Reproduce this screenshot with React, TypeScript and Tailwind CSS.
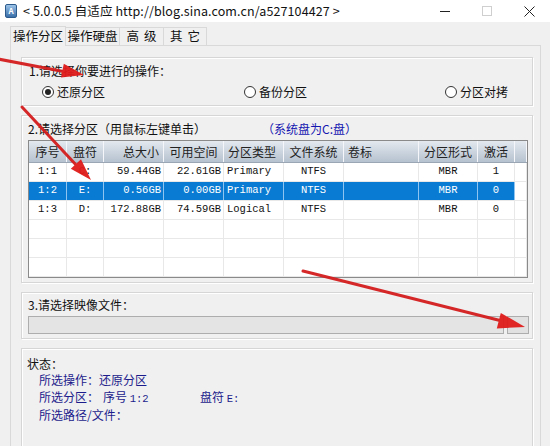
import React from 'react'

const cjk = { fontFamily: '"Noto Sans CJK SC", "Noto Sans", sans-serif' }
const mono = { fontFamily: '"Liberation Mono", "Noto Sans CJK SC", monospace' }

type Col = { label: string; w: string; align: string }

const cols: Col[] = [
  { label: '序号', w: 'w-[38px]', align: 'justify-center' },
  { label: '盘符', w: 'w-[37px]', align: 'justify-center' },
  { label: '总大小', w: 'w-[60px]', align: 'justify-end pr-1' },
  { label: '可用空间', w: 'w-[60px]', align: 'justify-center' },
  { label: '分区类型', w: 'w-[60px]', align: 'justify-start pl-1' },
  { label: '文件系统', w: 'w-[60px]', align: 'justify-center' },
  { label: '卷标', w: 'w-[75px]', align: 'justify-start pl-1' },
  { label: '分区形式', w: 'w-[59px]', align: 'justify-center' },
  { label: '激活', w: 'w-[37px]', align: 'justify-center' },
  { label: '', w: 'flex-1', align: 'justify-center' },
]

const rows = [
  ['1:1', 'C:', '59.44GB', '22.61GB', 'Primary', 'NTFS', '', 'MBR', '1', ''],
  ['1:2', 'E:', '0.56GB', '0.00GB', 'Primary', 'NTFS', '', 'MBR', '0', ''],
  ['1:3', 'D:', '172.88GB', '74.59GB', 'Logical', 'NTFS', '', 'MBR', '0', ''],
  ['', '', '', '', '', '', '', '', '', ''],
  ['', '', '', '', '', '', '', '', '', ''],
  ['', '', '', '', '', '', '', '', '', ''],
]

const dataAlign = [
  'justify-center',
  'justify-center',
  'justify-end pr-[2px]',
  'justify-end pr-[2px]',
  'justify-start pl-[3px]',
  'justify-center',
  'justify-start',
  'justify-center',
  'justify-center',
  'justify-center',
]

function Radio({ label, checked, className }: { label: string; checked?: boolean; className?: string }) {
  return (
    <div className={`flex items-center gap-[3px] ${className ?? ''}`}>
      <span className="w-[12px] h-[12px] rounded-full border border-[#333] bg-white flex items-center justify-center">
        {checked && <span className="w-[6px] h-[6px] rounded-full bg-[#222]" />}
      </span>
      <span className="text-[12px] text-[#111]">{label}</span>
    </div>
  )
}

function Group({ className, children }: { className: string; children: React.ReactNode }) {
  return (
    <div className={`border border-[#d6d6d6] shadow-[inset_1px_1px_0_#ffffff,1px_1px_0_#ffffff] ${className}`}>
      {children}
    </div>
  )
}

export default function App() {
  return (
    <div className="relative w-[550px] h-[446px] bg-[#f0f0f0] overflow-hidden" style={cjk}>
      {/* Title bar */}
      <div className="h-[22px] bg-white flex items-center">
        <div className="ml-[5px] w-[12px] h-[14px] rounded-[2px] bg-gradient-to-b from-[#9cc3e8] to-[#3a6fa8] border border-[#2c5a8c] flex items-center justify-center">
          <span className="text-[8px] leading-none text-white font-bold">A</span>
        </div>
        <span className="ml-[6px] text-[12.5px] text-[#111] tracking-[0.1px]">
          &lt; 5.0.0.5 自适应 http://blog.sina.com.cn/a527104427 &gt;
        </span>
        <div className="ml-auto flex items-center">
          <div className="w-[10px] h-[1px] bg-[#222] mr-[32px]" />
          <div className="w-[10px] h-[10px] border border-[#cfcfcf] mr-[32px]" />
          <svg width="11" height="11" viewBox="0 0 11 11" className="mr-[15px]">
            <path d="M0.5 0.5 L10.5 10.5 M10.5 0.5 L0.5 10.5" stroke="#222" strokeWidth="1" />
          </svg>
        </div>
      </div>

      {/* Tabs */}
      <div className="h-[23px] pl-[10px] flex items-end">
        <div className="h-[20px] w-[56px] bg-[#f0f0f0] border border-[#d9d9d9] border-b-0 flex items-center justify-center text-[12.5px] text-[#111] relative z-10 -mb-px pb-px">
          操作分区
        </div>
        <div className="h-[18px] w-[54px] bg-[#f0f0f0] border border-[#d9d9d9] border-b-0 border-l-0 flex items-center justify-center text-[12.5px] text-[#111]">
          操作硬盘
        </div>
        <div className="h-[18px] w-[44px] bg-[#f0f0f0] border border-[#d9d9d9] border-b-0 border-l-0 flex items-center justify-center text-[12.5px] text-[#111] tracking-[5px] pl-[5px]">
          高级
        </div>
        <div className="h-[18px] w-[43px] bg-[#f0f0f0] border border-[#d9d9d9] border-b-0 border-l-0 flex items-center justify-center text-[12.5px] text-[#111] tracking-[5px] pl-[5px]">
          其它
        </div>
      </div>

      {/* Panel */}
      <div className="ml-[10px] w-[531px] h-[420px] border border-[#d9d9d9] pt-[11px] pl-[10px] pr-[7px] flex flex-col">
        {/* Group 1 */}
        <Group className="h-[49px] pl-[7px] pt-[6px] flex flex-col">
          <div className="text-[12px] text-[#111] leading-[14px]">1.请选择你要进行的操作：</div>
          <div className="mt-[5px] ml-[13px] flex">
            <Radio label="还原分区" checked />
            <Radio label="备份分区" className="ml-[139px]" />
            <Radio label="分区对拷" className="ml-[138px]" />
          </div>
        </Group>

        {/* Group 2 */}
        <Group className="mt-[9px] h-[168px] pl-[6px] pr-[4px] pt-[5px]">
          <div className="flex items-center text-[12px] leading-[16px] h-[16px]">
            <span className="text-[#111]">2.请选择分区（用鼠标左键单击）</span>
            <span className="ml-[56px] text-[#1515b0]">（系统盘为C:盘）</span>
          </div>
          <div className="mt-[3px] h-[138px] border border-[#8a8a8a] bg-white flex flex-col">
            <div className="h-[22px] flex bg-gradient-to-b from-[#e4e9ef] via-[#ccd5df] to-[#b6c2cf] border-b border-[#9aa6b3]">
              {cols.map((c, i) => (
                <div
                  key={i}
                  className={`${c.w} h-full flex items-center ${c.align} border-r border-[#f4f6f9] text-[12px] text-[#222]`}
                >
                  {c.label}
                </div>
              ))}
            </div>
            {rows.map((r, ri) => {
              const sel = ri === 1
              return (
                <div key={ri} className="h-[19px] flex border-b border-[#e8e8e8] bg-white">
                  {r.map((v, ci) => {
                    const hi = sel && ci < 9
                    return (
                      <div
                        key={ci}
                        className={`${cols[ci].w} h-full flex items-center ${dataAlign[ci]} border-r ${
                          hi ? 'bg-[#0a7bd2] border-[#8fc4f0] text-white' : 'border-[#e8e8e8] text-[#111]'
                        } text-[10.5px]`}
                        style={mono}
                      >
                        {v}
                      </div>
                    )
                  })}
                </div>
              )
            })}
          </div>
        </Group>

        {/* Group 3 */}
        <Group className="mt-[9px] h-[47px] pl-[6px] pr-[3px] pt-[4px]">
          <div className="text-[12px] text-[#111] leading-[16px]">3.请选择映像文件：</div>
          <div className="mt-[3px] flex gap-[3px]">
            <div className="flex-1 h-[18px] bg-[#e4e4e4] border border-[#adadad]" />
            <div className="w-[22px] h-[18px] bg-[#e1e1e1] border border-[#adadad]" />
          </div>
        </Group>

        {/* Group 4 */}
        <Group className="mt-[9px] flex-1 pl-[5px] pt-[7px]">
          <div className="text-[12px] text-[#111] leading-[16px]">状态：</div>
          <div className="pl-[12px] text-[12px] text-[#1c1c8c] leading-[16.5px]">
            <div>所选操作：还原分区</div>
            <div className="flex">
              <span className="w-[64px]">所选分区：</span>
              <span className="w-[97px]">
                序号 <span style={mono} className="text-[10.5px]">1:2</span>
              </span>
              <span>
                盘符 <span style={mono} className="text-[10.5px]">E:</span>
              </span>
            </div>
            <div>所选路径/文件：</div>
          </div>
        </Group>
      </div>

      {/* Red arrows */}
      <svg className="absolute inset-0 pointer-events-none" width="550" height="446" viewBox="0 0 550 446">
        <g stroke="#d41d1d" strokeWidth="3" strokeLinecap="round" fill="#e01b1b" opacity="0.95">
          <line x1="-2" y1="59" x2="66" y2="72" />
          <polygon points="84,75 63.8,63.8 61,77.6" stroke="none" />
          <line x1="22" y1="107" x2="78" y2="167" />
          <polygon points="91,180 70.8,168.8 81,159.2" stroke="none" />
          <line x1="303" y1="271" x2="502" y2="321" />
          <polygon points="525,327 496.8,328.4 500.8,312.9" stroke="none" />
        </g>
      </svg>
    </div>
  )
}
